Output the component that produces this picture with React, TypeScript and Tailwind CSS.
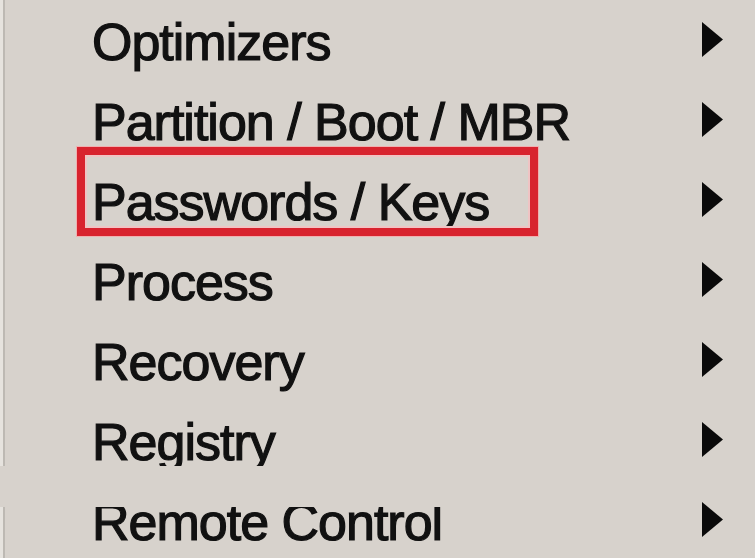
const items = [
  "Optimizers",
  "Partition / Boot / MBR",
  "Passwords / Keys",
  "Process",
  "Recovery",
  "Registry",
  "Remote Control",
];

function Arrow() {
  return (
    <svg width="21" height="35" viewBox="0 0 21 35" className="mb-[6px] shrink-0 blur-[0.6px]">
      <polygon points="0,0 21,17.5 0,35" fill="#0a0a0a" />
    </svg>
  );
}

export default function App() {
  return (
    <div className="relative w-[755px] h-[558px] overflow-hidden bg-[#d7d2cc] flex">
      {/* left 3d edge of the menu */}
      <div className="w-[3px] shrink-0 bg-[#e6e3de]" />
      <div className="w-[2px] shrink-0 bg-[#bdb9b3]" />

      <ul
        className="flex-1 flex flex-col pt-[2px] text-[52px] leading-none tracking-[-1px] text-[#111] blur-[0.4px] [-webkit-text-stroke:1.2px_#111]"
        style={{ fontFamily: '"Liberation Sans", Arial, sans-serif' }}
      >
        {items.map((label) => (
          <li key={label} className="h-20 shrink-0 flex items-center pl-[87px] pr-[32px]">
            <span className="whitespace-nowrap">{label}</span>
            <span className="ml-auto" />
            <Arrow />
          </li>
        ))}
      </ul>

      {/* red highlight around the selected entry */}
      <div className="absolute left-[77px] top-[147px] w-[461px] h-[89px] border-[8px] border-[#d8232e] shadow-[inset_0_0_0_2px_#efc4c4,0_0_0_1px_#f0b0b0]" />

      {/* strip where the screenshot was cut and glued */}
      <div className="absolute left-0 top-[466px] w-[620px] h-[41px] bg-[#d7d2cc]" />
    </div>
  );
}
